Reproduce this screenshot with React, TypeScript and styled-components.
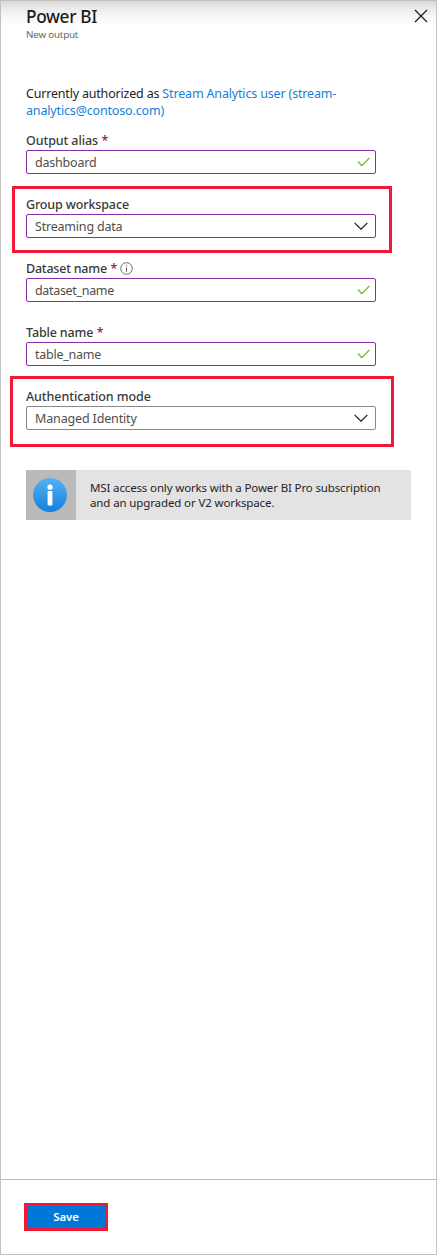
import React from "react";
import styled, { createGlobalStyle } from "styled-components";

const GlobalStyle = createGlobalStyle`
  *, *::before, *::after { box-sizing: border-box; }
  body {
    margin: 0;
    background: #fff;
    font-family: "Noto Sans", "Open Sans", sans-serif;
    color: #3b3a39;
  }
`;

const Blade = styled.main`
  display: flex;
  flex-direction: column;
  width: 437px;
  height: 1255px;
  border: 1px solid #c1c1c1;
  background: linear-gradient(#d9d9d9 0, #ebebeb 8px, #f8f8f8 16px, #fff 26px);
`;

const Header = styled.header`
  display: flex;
  justify-content: space-between;
  height: 84px;
  padding: 4px 8px 0 25px;
`;

const Title = styled.h1`
  margin: 0;
  font-size: 17.3px;
  line-height: 24px;
  font-weight: 500;
  letter-spacing: -0.36px;
  color: #1b1a19;
  white-space: nowrap;
`;

const Subtitle = styled.div`
  font-size: 9.8px;
  line-height: 12px;
  letter-spacing: -0.2px;
  color: #6a6866;
`;

const CloseButton = styled.button`
  display: flex;
  align-self: flex-start;
  margin-top: 4px;
  padding: 0;
  border: 0;
  background: none;
`;

const Body = styled.section`
  flex: 1;
  display: flex;
  flex-direction: column;
  padding-left: 25px;
`;

const Authorized = styled.p`
  margin: 0 0 13px;
  font-size: 12.5px;
  line-height: 17px;
  letter-spacing: -0.19px;
  color: #252423;
  white-space: nowrap;
`;

const Account = styled.a`
  color: #1480d8;
  letter-spacing: -0.16px;
`;

const Field = styled.div`
  width: 350px;
  margin-bottom: 22px;
`;

const Highlight = styled.div<{ $inset: number; $top: number; $bottom: number; $gapAfter: number }>`
  width: ${(p) => 350 + p.$inset * 2 + 2}px;
  margin: -${(p) => p.$top}px 0 ${(p) => p.$gapAfter}px -${(p) => p.$inset}px;
  padding: ${(p) => p.$top - 3}px 0 ${(p) => p.$bottom - 3}px ${(p) => p.$inset - 3}px;
  border: 3px solid #f21836;

  ${Field} { margin-bottom: 0; }
`;

const Label = styled.label<{ $tracking?: number }>`
  display: flex;
  align-items: center;
  height: 18px;
  font-size: 12.5px;
  line-height: 18px;
  font-weight: 500;
  letter-spacing: ${(p) => p.$tracking ?? -0.1}px;
  white-space: nowrap;
`;

const Required = styled.span`
  margin-left: 3.5px;
  font-weight: 600;
  color: #b02a32;
`;

const InfoSvg = styled.svg`
  margin: 0 0 2px 3px;
`;

const Control = styled.div<{ $neutral?: boolean; $tracking?: number }>`
  display: flex;
  align-items: center;
  justify-content: space-between;
  height: 24px;
  padding: 0 4px 0 8px;
  border: 1px solid ${(p) => (p.$neutral ? "#8a8886" : "#8a2da5")};
  border-radius: 2px;
  background: #fff;
  font-size: 12.5px;
  line-height: 22px;
  letter-spacing: ${(p) => p.$tracking ?? -0.2}px;
  color: #504e4c;
`;

const Value = styled.span`
  padding-top: 1px;
`;

const ChevronSvg = styled.svg`
  margin-right: 3px;
`;

const Notice = styled.aside`
  display: flex;
  width: 385px;
  height: 50px;
  background: #e3e3e3;
`;

const NoticeIcon = styled.div`
  display: flex;
  align-items: center;
  justify-content: center;
  width: 50px;
  padding-right: 2px;
  background: #bababa;
`;

const NoticeText = styled.p`
  margin: 0;
  padding: 10px 0 0 14px;
  font-size: 11.5px;
  line-height: 15px;
  color: #252423;
  white-space: nowrap;
`;

const NoticeLine = styled.span<{ $tracking: number }>`
  display: block;
  letter-spacing: ${(p) => p.$tracking}px;
`;

const Footer = styled.footer`
  height: 75px;
  padding: 23px 0 0 23px;
  border-top: 1px solid #b9b9b9;
`;

const SaveButton = styled.button`
  display: block;
  width: 84px;
  height: 28px;
  padding: 0;
  border: 3px solid #f21836;
  background: #0078d7;
  color: #fff;
  font: 600 11.5px/22px "Noto Sans", "Open Sans", sans-serif;
  letter-spacing: -0.1px;
`;

const Check = () => (
  <svg width="14" height="12" viewBox="0 0 14 12" fill="none" stroke="#6bb12f" strokeWidth="1.3">
    <path d="M1 5.8 4.8 9.6 12.5 1.9" />
  </svg>
);

const Chevron = () => (
  <ChevronSvg width="14" height="10" viewBox="0 0 14 10" fill="none" stroke="#1b1a19" strokeWidth="1.2">
    <path d="M.6 1.8 7 8.2 13.4 1.8" />
  </ChevronSvg>
);

const Hint = () => (
  <InfoSvg width="13" height="13" viewBox="0 0 13 13" fill="none" stroke="#605e5c">
    <circle cx="6.5" cy="6.5" r="5.8" strokeWidth=".9" />
    <path d="M6.5 5.4V9.7M6.5 3.2V4.3" />
  </InfoSvg>
);

export default function App() {
  return (
    <>
      <GlobalStyle />
      <Blade>
        <Header>
          <div>
            <Title>Power BI</Title>
            <Subtitle>New output</Subtitle>
          </div>
          <CloseButton aria-label="Close">
            <svg width="14" height="14" viewBox="0 0 14 14" stroke="#1b1a19" strokeWidth="1.15">
              <path d="M1 1 13 13M13 1 1 13" />
            </svg>
          </CloseButton>
        </Header>
        <Body>
          <Authorized>
            Currently authorized as <Account>Stream Analytics user (stream-<br />analytics@contoso.com)</Account>
          </Authorized>
          <Field>
            <Label>Output alias<Required>*</Required></Label>
            <Control><Value>dashboard</Value><Check /></Control>
          </Field>
          <Highlight $inset={14} $top={10} $bottom={15} $gapAfter={7}>
            <Field>
              <Label $tracking={-0.13}>Group workspace</Label>
              <Control><Value>Streaming data</Value><Chevron /></Control>
            </Field>
          </Highlight>
          <Field>
            <Label $tracking={-0.22}>Dataset name<Required>*</Required><Hint /></Label>
            <Control $tracking={-0.32}><Value>dataset_name</Value><Check /></Control>
          </Field>
          <Field>
            <Label $tracking={-0.15}>Table name<Required>*</Required></Label>
            <Control $tracking={-0.25}><Value>table_name</Value><Check /></Control>
          </Field>
          <Highlight $inset={16} $top={12} $bottom={17} $gapAfter={23}>
            <Field>
              <Label $tracking={-0.08}>Authentication mode</Label>
              <Control $neutral $tracking={-0.15}><Value>Managed Identity</Value><Chevron /></Control>
            </Field>
          </Highlight>
          <Notice>
            <NoticeIcon>
              <svg width="34" height="34" viewBox="0 0 34 34">
                <defs>
                  <linearGradient id="noticeBlue" x1="0" y1="0" x2="0" y2="1">
                    <stop offset="0" stopColor="#55b1f3" />
                    <stop offset="1" stopColor="#1381dc" />
                  </linearGradient>
                </defs>
                <circle cx="17" cy="17" r="17" fill="url(#noticeBlue)" />
                <circle cx="17" cy="9.2" r="2.6" fill="#fff" />
                <rect x="14.6" y="13" width="4.8" height="14.6" rx="1" fill="#fff" />
              </svg>
            </NoticeIcon>
            <NoticeText>
              <NoticeLine $tracking={-0.14}>MSI access only works with a Power BI Pro subscription</NoticeLine>
              <NoticeLine $tracking={-0.12}>and an upgraded or V2 workspace.</NoticeLine>
            </NoticeText>
          </Notice>
        </Body>
        <Footer>
          <SaveButton>Save</SaveButton>
        </Footer>
      </Blade>
    </>
  );
}
